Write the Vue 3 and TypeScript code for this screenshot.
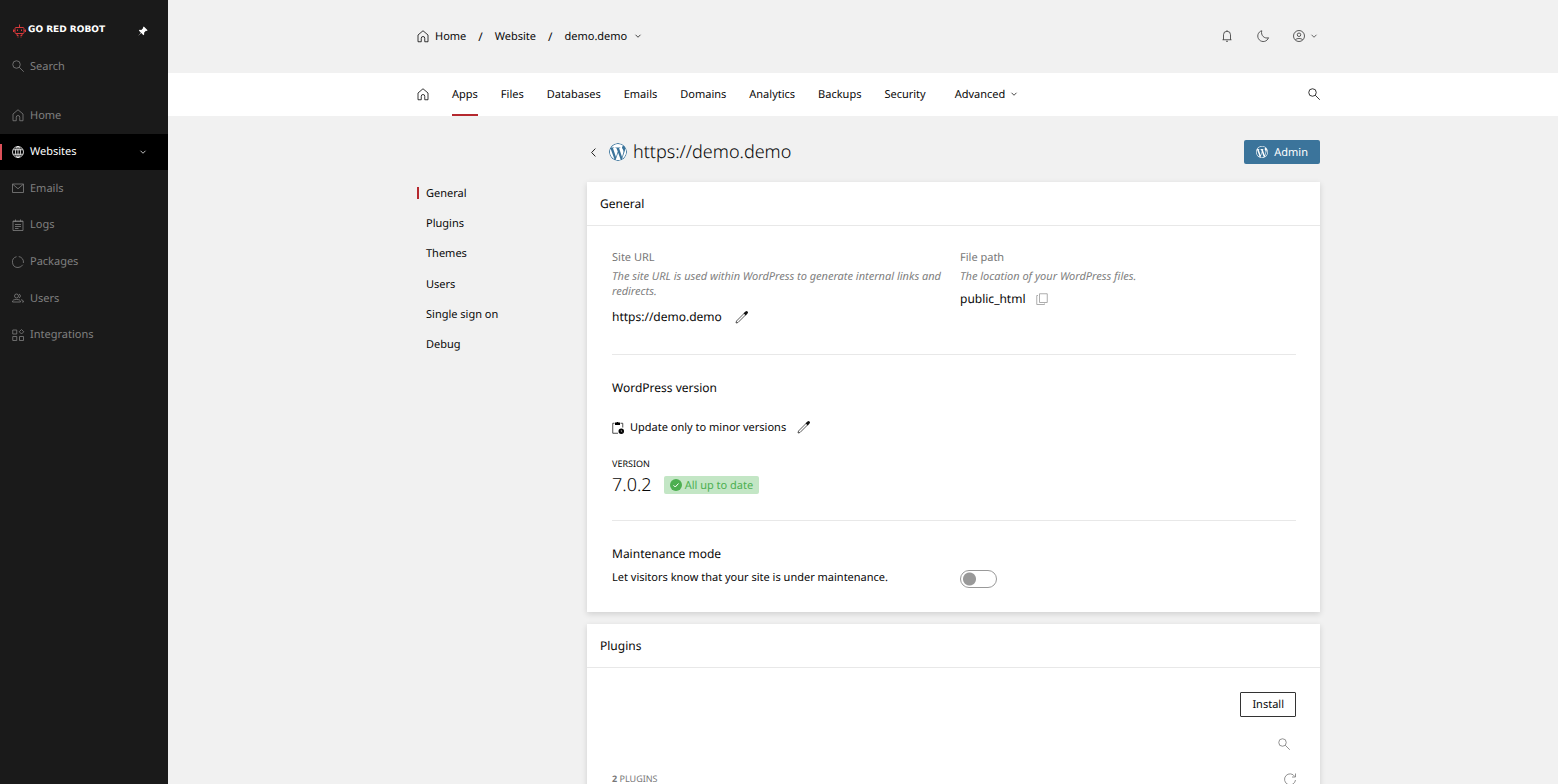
<script setup lang="ts">
import { h, ref } from 'vue'

const icons: Record<string, string[]> = {
  search: ['M16.500 9a7.500 7.500 0 1 1-15 0a7.500 7.500 0 0 1 15 0z', 'M14.500 14.500l9 9'],
  home: ['M2 23.500V10L12 1.500l10 8.500v13.500h-6.500v-7a3.500 3.500 0 0 0-7 0v7z'],
  globe: [
    'M23 12a11 11 0 1 1-22 0a11 11 0 0 1 22 0z',
    'M17 12c0 6-2.200 11-5 11s-5-5-5-11s2.200-11 5-11s5 5 5 11z',
    'M2.500 7.500h19M2.500 16.500h19M12 1v22',
  ],
  mail: ['M1 4h22v17H1z', 'M1.500 4.500L12 13.500l10.500-9'],
  logs: ['M2 4h20v19H2z', 'M7 1v5M17 1v5M2 5h20M6 11h12M6 15h12M6 19h7'],
  packages: ['M9 1.400A11 11 0 0 0 12 23a11 11 0 0 0 9.500-5.500', 'M13.500 1.100A11 11 0 0 1 22.800 14'],
  users: [
    'M13 8a4 4 0 1 1-8 0a4 4 0 0 1 8 0z',
    'M1 20c0-4 3-5 8-5s8 1 8 5z',
    'M14 4.200a4 4 0 0 1 0 7.600M18 15.500c3 .5 5 1.500 5 4.500h-3',
  ],
  integrations: ['M1.500 2h8v8h-8zM1.500 15h8v8h-8zM15 15h8v8h-8z', 'M19 1l4.500 4.500L19 10l-4.500-4.500z'],
  chevron: ['M2 7l10 10L22 7'],
  back: ['M17 1.500L7 12l10 10.500'],
  bell: ['M3 19.500h18M5 19.500V9.500a7 7 0 0 1 14 0v10M12 .5v2M10 22.500h4'],
  moon: ['M9.500 1.500A11 11 0 1 0 23 15.500C15 18 7 11 9.500 1.500z'],
  account: [
    'M23 12a11 11 0 1 1-22 0a11 11 0 0 1 22 0z',
    'M15.500 9.500a3.500 3.500 0 1 1-7 0a3.500 3.500 0 0 1 7 0z',
    'M5 19c2-1.500 4-2 7-2s5 .5 7 2',
  ],
  copy: ['M7 1.500h15.500v17.500H7z', 'M4 5H1.500v18H17v-2'],
  refresh: ['M21.500 7A11 11 0 1 0 23 14', 'M23 1v7h-7'],
}

const Icon = (props: { name: string }) =>
  h('svg', { class: 'icon', viewBox: '0 0 24 24', 'aria-hidden': 'true' }, icons[props.name].map((d) => h('path', { d })))
Icon.props = ['name']

const wpPath =
  'M21.469 6.825c.84 1.537 1.318 3.3 1.318 5.175 0 3.979-2.156 7.456-5.363 9.325l3.295-9.527c.615-1.54.82-2.771.82-3.864 0-.405-.026-.78-.07-1.11m-7.981.105c.647-.03 1.232-.105 1.232-.105.582-.075.514-.93-.067-.899 0 0-1.755.135-2.88.135-1.064 0-2.85-.15-2.85-.15-.585-.03-.661.855-.075.885 0 0 .54.061 1.125.09l1.68 4.605-2.37 7.08L5.354 6.9c.649-.03 1.234-.1 1.234-.1.585-.075.516-.93-.065-.896 0 0-1.746.138-2.874.138-.2 0-.438-.008-.69-.015C4.911 3.15 8.235 1.215 12 1.215c2.809 0 5.365 1.072 7.286 2.833-.046-.003-.091-.009-.141-.009-1.06 0-1.812.923-1.812 1.914 0 .89.513 1.643 1.06 2.531.411.72.89 1.643.89 2.977 0 .915-.354 1.994-.821 3.479l-1.075 3.585-3.9-11.61.001.014zM12 22.784c-1.059 0-2.081-.153-3.048-.437l3.237-9.406 3.315 9.087c.024.053.05.101.078.149-1.12.393-2.325.609-3.582.609M1.211 12c0-1.564.336-3.05.935-4.39L7.29 21.709C3.694 19.96 1.212 16.271 1.211 12M12 0C5.385 0 0 5.385 0 12s5.385 12 12 12 12-5.385 12-12S18.615 0 12 0'

const WordPress = () => h('svg', { class: 'wp', viewBox: '0 0 24 24', 'aria-hidden': 'true' }, [h('path', { d: wpPath })])

const mainMenu = [
  { label: 'Home', icon: 'home' },
  { label: 'Websites', icon: 'globe', active: true },
  { label: 'Emails', icon: 'mail' },
  { label: 'Logs', icon: 'logs' },
  { label: 'Packages', icon: 'packages' },
  { label: 'Users', icon: 'users' },
  { label: 'Integrations', icon: 'integrations' },
]
const tabs = ['Apps', 'Files', 'Databases', 'Emails', 'Domains', 'Analytics', 'Backups', 'Security']
const sections = ['General', 'Plugins', 'Themes', 'Users', 'Single sign on', 'Debug']

const activeTab = ref('Apps')
const activeSection = ref('General')
const maintenance = ref(false)
</script>

<template>
  <div class="app">
    <aside class="sidebar">
      <div class="brand">
        <a class="logo" href="#">
          <svg class="robot" viewBox="0 0 26 28" aria-hidden="true">
            <path d="M13 1v6M4 9q0-2 2-2h14q2 0 2 2v8q0 2-2 2H6q-2 0-2-2zM1 11v5M25 11v5M1 13.500h3M22 13.500h3M8 19v4h3M18 19v4h-3M9 26h2M15 26h2" />
            <path d="M9 11v3M17 11v3" />
          </svg>
          <span>GO RED ROBOT</span>
        </a>
        <button class="pin" type="button" aria-label="Pin menu">
          <svg viewBox="0 0 24 24" aria-hidden="true">
            <path d="M14 1l9 9l-2 2l-2-.5l-4.500 4.500l.5 4l-2 2l-5-5l-6.500 6l-.5-.5l6-6.500l-5-5l2-2l4 .5L12.500 5L12 3z" />
          </svg>
        </button>
      </div>
      <button class="side-search" type="button"><Icon name="search" />Search</button>
      <nav class="menu" aria-label="Main">
        <a v-for="item in mainMenu" :key="item.label" href="#" :class="['menu-item', { active: item.active }]">
          <Icon :name="item.icon" />
          <span>{{ item.label }}</span>
          <Icon v-if="item.active" class="small menu-chevron" name="chevron" />
        </a>
      </nav>
    </aside>

    <div class="main">
      <header class="topbar">
        <div class="container topbar-inner">
          <nav class="crumbs" aria-label="Breadcrumb">
            <a href="#" class="crumb-home"><Icon name="home" />Home</a>
            <span class="slash">/</span>
            <a href="#">Website</a>
            <span class="slash">/</span>
            <button type="button" class="crumb-menu">demo.demo<Icon class="small" name="chevron" /></button>
          </nav>
          <div class="tools">
            <button type="button" aria-label="Notifications"><Icon name="bell" /></button>
            <button type="button" aria-label="Dark mode"><Icon name="moon" /></button>
            <button type="button" class="account" aria-label="Account"><Icon name="account" /><Icon class="small" name="chevron" /></button>
          </div>
        </div>
      </header>

      <div class="tabbar">
        <nav class="container tabs" aria-label="Website">
          <a href="#" class="tab" aria-label="Overview"><Icon name="home" /></a>
          <a
            v-for="tab in tabs"
            :key="tab"
            href="#"
            :class="['tab', { active: tab === activeTab }]"
            @click.prevent="activeTab = tab"
          >{{ tab }}</a>
          <button type="button" class="tab advanced">Advanced<Icon class="small" name="chevron" /></button>
          <button type="button" class="tab tab-search" aria-label="Search"><Icon name="search" /></button>
        </nav>
      </div>

      <div class="page">
        <div class="container page-inner">
          <nav class="sections" aria-label="Sections">
            <a
              v-for="section in sections"
              :key="section"
              href="#"
              :class="{ active: section === activeSection }"
              @click.prevent="activeSection = section"
            >{{ section }}</a>
          </nav>

          <main class="content">
            <div class="title-row">
              <a class="back" href="#" aria-label="Back"><Icon class="back-icon" name="back" /></a>
              <WordPress class="site-logo" />
              <h1>https://demo.demo</h1>
              <button class="admin" type="button"><WordPress />Admin</button>
            </div>

            <section class="card">
              <h2 class="card-title">General</h2>
              <div class="card-body">
                <div class="columns">
                  <div>
                    <h3 class="label">Site URL</h3>
                    <p class="hint">The site URL is used within WordPress to generate internal links and redirects.</p>
                    <p class="value">
                      https://demo.demo
                      <button type="button" aria-label="Edit site URL">
                        <svg class="pencil" viewBox="0 0 26 26" aria-hidden="true">
                          <path class="pencil-body" d="M2 24l1-4L18.500 4.500l3 3L6 23z" />
                          <path class="pencil-tip" d="M17 4.500L21 1a2.500 2.500 0 0 1 4 4l-3.500 4z" />
                        </svg>
                      </button>
                    </p>
                  </div>
                  <div>
                    <h3 class="label">File path</h3>
                    <p class="hint">The location of your WordPress files.</p>
                    <p class="value tight">
                      public_html
                      <button type="button" aria-label="Copy path"><Icon class="copy" name="copy" /></button>
                    </p>
                  </div>
                </div>

                <div class="block">
                  <h3 class="subhead">WordPress version</h3>
                  <div class="update">
                    <svg class="clipboard" viewBox="0 0 24 24" aria-hidden="true">
                      <path class="outline" d="M12 22.500H1.500V2.500H5M17 2.500h4.500V11" />
                      <path d="M6 1h3a2.500 2.500 0 0 1 4 0h3v5H6zM24 18.500a5.500 5.500 0 1 1-11 0a5.500 5.500 0 0 1 11 0z" />
                      <path class="hand" d="M18.500 16v3l2 1" />
                    </svg>
                    <span>Update only to minor versions</span>
                    <button type="button" aria-label="Edit update policy">
                      <svg class="pencil" viewBox="0 0 26 26" aria-hidden="true">
                        <path class="pencil-body" d="M2 24l1-4L18.500 4.500l3 3L6 23z" />
                        <path class="pencil-tip" d="M17 4.500L21 1a2.500 2.500 0 0 1 4 4l-3.500 4z" />
                      </svg>
                    </button>
                  </div>
                  <div class="caption">VERSION</div>
                  <div class="version">
                    <span class="number">7.0.2</span>
                    <span class="badge">
                      <svg viewBox="0 0 24 24" aria-hidden="true">
                        <circle cx="12" cy="12" r="12" />
                        <path d="M7 12.500l3.500 3.500L17 9" />
                      </svg>
                      All up to date
                    </span>
                  </div>
                </div>

                <div class="block last columns maintenance">
                  <div>
                    <h3 class="subhead">Maintenance mode</h3>
                    <label for="maintenance">Let visitors know that your site is under maintenance.</label>
                  </div>
                  <input id="maintenance" v-model="maintenance" class="toggle" type="checkbox" role="switch" />
                </div>
              </div>
            </section>

            <section class="card">
              <h2 class="card-title">Plugins</h2>
              <div class="card-body plugins">
                <button class="install" type="button">Install</button>
                <button class="plugin-search" type="button" aria-label="Search plugins"><Icon name="search" /></button>
                <div class="count">
                  <span><b>2</b> PLUGINS</span>
                  <button type="button" aria-label="Refresh"><Icon name="refresh" /></button>
                </div>
              </div>
            </section>
          </main>
        </div>
      </div>
    </div>
  </div>
</template>

<style>
body {
  margin: 0;
  background: #f1f1f1;
  overflow: hidden;
}
</style>

<style scoped>
.app {
  display: flex;
  height: 100vh;
  overflow: hidden;
  font: 11px/17px "Noto Sans", sans-serif;
  text-rendering: geometricPrecision;
  color: #080808;
  background: #f1f1f1;
}
button {
  display: inline-flex;
  align-items: center;
  padding: 0;
  border: 0;
  background: none;
  font: inherit;
  color: inherit;
  text-rendering: inherit;
  cursor: pointer;
}
a {
  color: inherit;
  text-decoration: none;
}
h1, h2, h3, p {
  margin: 0;
  font-weight: 400;
}
.icon {
  flex: none;
  width: 12px;
  height: 12px;
  fill: none;
  stroke: currentColor;
  stroke-width: 1.6;
  overflow: visible;
}
.icon.small {
  width: 6px;
  height: 6px;
  stroke-width: 3;
}

.sidebar {
  flex: none;
  width: 168px;
  background: #1a1a1a;
  color: #808080;
}
.brand {
  display: flex;
  align-items: center;
  justify-content: space-between;
  height: 23px;
  padding: 19px 20px 0 13px;
}
.logo {
  display: flex;
  align-items: center;
  gap: 2px;
  font: 700 9px/13px "DejaVu Sans", sans-serif;
  color: #fff;
  white-space: nowrap;
}
.robot {
  width: 13px;
  height: 14px;
  fill: none;
  stroke: #d8393b;
  stroke-width: 2;
}
.pin svg {
  width: 10px;
  height: 10px;
  fill: #fff;
}
.side-search {
  gap: 6px;
  height: 36px;
  margin: 6px 0 13px;
  padding-left: 12px;
}
.menu {
  display: grid;
  grid-auto-rows: 1fr;
  height: 256px;
}
.menu-item {
  display: flex;
  align-items: center;
  gap: 6px;
  padding: 0 22px 0 12px;
}
.menu-item.active {
  background: linear-gradient(#dc5059, #dc5059) left center / 2px 16px no-repeat #000;
  color: #fff;
}
.menu-chevron {
  margin-left: auto;
}

.main {
  flex: 1;
  min-width: 0;
}
.container {
  max-width: 903px;
  margin: 0 auto;
}
.topbar, .tabbar, .page {
  padding-left: 11px;
}
.topbar-inner {
  display: flex;
  align-items: center;
  justify-content: space-between;
  height: 72px;
  padding-bottom: 1px;
}
.crumbs {
  display: flex;
  align-items: center;
  gap: 12px;
}
.crumb-home {
  display: flex;
  align-items: center;
  gap: 6px;
}
.slash {
  font-size: 12px;
}
.crumb-menu {
  gap: 8px;
}
.tools {
  display: flex;
  gap: 24px;
  padding-right: 3px;
  color: #333;
}
.account {
  gap: 6px;
}
.tabbar {
  background: #fff;
}
.tabs {
  display: flex;
  gap: 23px;
  height: 43px;
}
.tab {
  display: flex;
  align-items: center;
  padding-bottom: 1px;
}
.tab.active {
  box-shadow: inset 0 -2px #b5282e;
}
.advanced {
  gap: 6px;
  margin-left: 6px;
}
.tab-search {
  margin-left: auto;
}

.page-inner {
  display: flex;
}
.sections {
  display: grid;
  grid-auto-rows: 1fr;
  flex: none;
  width: 170px;
  height: 182px;
  margin-top: 62px;
}
.sections a {
  display: flex;
  align-items: center;
  padding-left: 9px;
}
.sections a.active {
  background: linear-gradient(#b5282e, #b5282e) left center / 2px 12px no-repeat;
}
.content {
  flex: 1;
  min-width: 0;
}
.title-row {
  display: flex;
  align-items: center;
  height: 24px;
  padding: 24px 0 18px 2px;
}
.back {
  display: flex;
}
.back-icon {
  width: 9px;
  height: 9px;
  stroke-width: 2.4;
}
.wp {
  width: 12px;
  height: 12px;
  fill: currentColor;
}
.site-logo {
  width: 18px;
  height: 18px;
  margin: 0 6px 0 11px;
  border-radius: 50%;
  background: #fff;
  color: #3b749b;
}
h1 {
  font-size: 18px;
  line-height: 24px;
  font-weight: 300;
}
.admin {
  gap: 6px;
  height: 24px;
  margin-left: auto;
  padding: 0 12px;
  border-radius: 2px;
  background: #3b749b;
  color: #fff;
}
.card {
  margin-bottom: 12px;
  background: #fff;
  box-shadow: 0 2px 6px rgba(0, 0, 0, 0.14);
}
.card-title {
  padding: 12px 13px;
  border-bottom: 1px solid #e8e8e8;
  font-size: 12px;
  line-height: 19px;
}
.card-body {
  padding: 24px 24px 24px 25px;
}
.columns {
  display: grid;
  grid-template-columns: 1fr 1fr;
  gap: 12px;
}
.label {
  color: #777;
  font-size: 11px;
  line-height: 16px;
}
.hint {
  margin-top: 3px;
  color: #808080;
  line-height: 15px;
  font-style: italic;
}
.value {
  display: flex;
  align-items: center;
  gap: 13px;
  margin-top: 9px;
  font-size: 12px;
  line-height: 18px;
}
.value.tight {
  gap: 10px;
  margin-top: 6px;
}
.pencil {
  width: 13px;
  height: 13px;
}
.pencil-body {
  fill: none;
  stroke: #222;
  stroke-width: 1.5;
}
.pencil-tip {
  fill: #111;
}
.copy {
  color: #999;
}
.block {
  margin-top: 28px;
  padding-top: 24px;
  border-top: 1px solid #e8e8e8;
}
.block.last {
  margin-top: 23px;
}
.subhead {
  font-size: 12px;
  line-height: 18px;
}
.update {
  display: flex;
  align-items: center;
  gap: 6px;
  margin-top: 22px;
}
.update button {
  margin-left: 5px;
}
.clipboard {
  width: 12px;
  height: 12px;
}
.clipboard .outline {
  fill: none;
  stroke: #222;
  stroke-width: 1.6;
}
.clipboard .hand {
  fill: none;
  stroke: #fff;
  stroke-width: 1;
}
.caption {
  margin: 20px 0 2px;
  font-size: 9px;
  line-height: 15px;
}
.version {
  display: flex;
  align-items: center;
  gap: 12px;
}
.number {
  font-size: 18px;
  line-height: 24px;
  font-weight: 300;
}
.badge {
  display: flex;
  align-items: center;
  gap: 3px;
  height: 18px;
  padding: 0 6px;
  border-radius: 2px;
  background: #c3e6c5;
  color: #4caf50;
}
.badge svg {
  width: 12px;
  height: 12px;
  fill: #4caf50;
}
.badge path {
  fill: none;
  stroke: #fff;
  stroke-width: 2;
}
.maintenance label {
  display: block;
  margin-top: 6px;
}
.toggle {
  appearance: none;
  box-sizing: border-box;
  width: 37px;
  height: 18px;
  margin: 25px 0 0;
  border: 1px solid #999;
  border-radius: 9px;
  background: radial-gradient(circle, #999 6px, transparent 7px) 2px center / 13px 14px no-repeat;
  cursor: pointer;
}
.toggle:checked {
  background-position: 20px center;
}
.plugins {
  display: flex;
  flex-direction: column;
  align-items: flex-end;
}
.install {
  height: 25px;
  padding: 0 11px;
  border: 1px solid #333;
  border-radius: 1px;
}
.plugin-search {
  margin: 21px 6px 0 0;
  color: #777;
}
.count {
  display: flex;
  align-items: center;
  justify-content: space-between;
  align-self: stretch;
  margin-top: 20px;
  font-size: 9px;
  color: #777;
}
</style>
